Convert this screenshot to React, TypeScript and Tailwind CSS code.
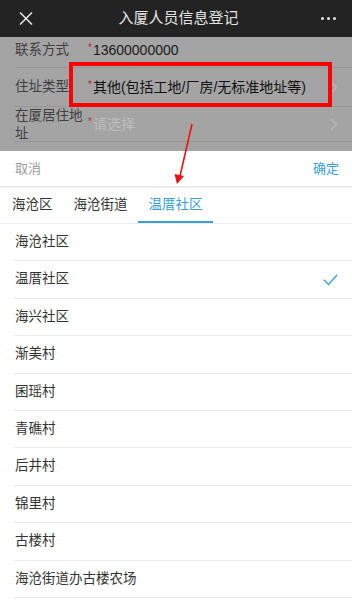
import React from 'react';

const communities = [
  '海沧社区',
  '温厝社区',
  '海兴社区',
  '渐美村',
  '囷瑶村',
  '青礁村',
  '后井村',
  '锦里村',
  '古楼村',
  '海沧街道办古楼农场',
];

const Chevron = () => (
  <svg width="8" height="13" viewBox="0 0 8 13" className="shrink-0">
    <path d="M1 1 L6.5 6.5 L1 12" fill="none" stroke="#b9b9b9" strokeWidth="1.2" />
  </svg>
);

const App: React.FC = () => {
  return (
    <div
      className="relative w-[352px] h-[602px] overflow-hidden bg-white"
      style={{ fontFamily: '"Liberation Sans", "Noto Sans CJK SC", sans-serif' }}
    >
      {/* page under the overlay */}
      <div className="h-[151px] flex flex-col bg-[#a4a4a4]">
        <div className="h-[37px] shrink-0 bg-[#232323] flex items-center justify-between pl-[19px] pr-[16px]">
          <svg width="14" height="13" viewBox="0 0 14 13">
            <path d="M1 0.5 L13 12.5 M13 0.5 L1 12.5" stroke="#e6e6e6" strokeWidth="1.5" />
          </svg>
          <span className="text-[15px] text-[#e4e4e4] ml-[3px]">入厦人员信息登记</span>
          <div className="flex gap-[3px]">
            <span className="w-[3px] h-[3px] rounded-full bg-[#e6e6e6]"></span>
            <span className="w-[3px] h-[3px] rounded-full bg-[#e6e6e6]"></span>
            <span className="w-[3px] h-[3px] rounded-full bg-[#e6e6e6]"></span>
          </div>
        </div>

        <div className="ml-[15px] h-[31px] pt-[3px] flex border-b border-[#969696] text-[14px] leading-[20px]">
          <span className="w-[73px] text-[13.5px] text-[#3f3f3f]">联系方式</span>
          <span className="text-[#b03030] text-[10px] mt-[-2px]">*</span>
          <span className="text-[#1a1a1a] ml-[1px]">13600000000</span>
        </div>

        <div className="ml-[15px] h-[39px] flex items-center border-b border-[#969696] text-[14px] pr-[14px]">
          <span className="w-[73px] text-[13.5px] text-[#3f3f3f]">住址类型</span>
          <span className="text-[#b03030] text-[10px] mt-[-6px]">*</span>
          <span className="text-[#111] ml-[1px] flex-1">其他(包括工地/厂房/无标准地址等)</span>
          <Chevron />
        </div>

        <div className="ml-[15px] h-[35px] flex items-center border-b border-[#969696] text-[14px] pr-[14px]">
          <span className="w-[73px] text-[13.5px] text-[#3f3f3f] leading-[17.5px] pt-[1px]">在厦居住地址</span>
          <span className="text-[#b03030] text-[10px] mt-[-6px]">*</span>
          <span className="text-[#bcbcbc] ml-[1px] flex-1">请选择</span>
          <Chevron />
        </div>
      </div>

      {/* picker sheet */}
      <div className="flex flex-col">
        <div className="h-[35px] flex items-center justify-between px-[15px] text-[13px]">
          <span className="text-[#9a9a9a]">取消</span>
          <span className="text-[#3a9fd6] mr-[-2px]">确定</span>
        </div>
        <div className="h-[2px] bg-[#ececec]"></div>
        <div className="h-[36px] flex items-stretch pl-[1.5px] border-b border-[#eeeeee] text-[13.5px]">
          <div className="px-[10.5px] flex items-center text-[#333]">海沧区</div>
          <div className="px-[10.5px] flex items-center text-[#333]">海沧街道</div>
          <div className="px-[10.5px] flex items-center text-[#3a9fd6] border-b-2 border-[#3a9fd6] pt-[2px]">温厝社区</div>
        </div>
        <div className="flex flex-col">
          {communities.map((name, i) => (
            <div
              key={name}
              className="ml-[14px] h-[37.4px] flex items-center justify-between border-b border-[#ececec] pl-[1px] pr-[14px] text-[13.5px] text-[#333]"
            >
              <span>{name}</span>
              {i === 1 && (
                <svg width="15" height="12" viewBox="0 0 15 12">
                  <path d="M0.8 5.8 L5.5 10.5 L14.2 0.8" fill="none" stroke="#3a9fd6" strokeWidth="1.3" />
                </svg>
              )}
            </div>
          ))}
        </div>
      </div>

      {/* annotation: red box */}
      <div className="absolute left-[69px] top-[62px] w-[263px] h-[45px] border-[4px] border-[#ff0000]"></div>

      {/* annotation: arrow */}
      <svg className="absolute left-0 top-0" width="352" height="200" viewBox="0 0 352 200">
        <line x1="192" y1="124" x2="180" y2="176" stroke="#ee1111" strokeWidth="1.6" />
        <polygon points="177,184 174.5,174 184,176" fill="#ee1111" />
      </svg>
    </div>
  );
};

export default App;
